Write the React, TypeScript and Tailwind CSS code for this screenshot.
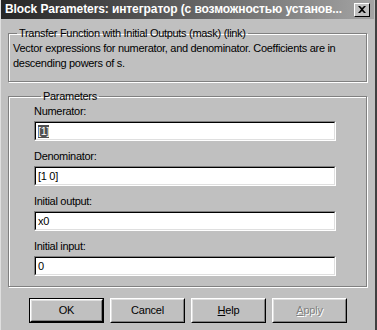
import React from "react";

const sunkenOuter = "border border-t-[#808080] border-l-[#808080] border-b-white border-r-white";
const sunkenInner = "border border-t-black border-l-black border-b-[#dfdfdf] border-r-[#dfdfdf]";

function Field({ label, value, selected }: { label: string; value: string; selected?: boolean }) {
  return (
    <div className="flex flex-col h-[45px]">
      <div className="h-[15px] leading-[15px] text-[11px] tracking-[-0.3px] text-black">{label}</div>
      <div className={`mt-[2px] w-[302px] h-[20px] ${sunkenOuter}`}>
        <div className={`h-full w-full bg-white ${sunkenInner} pl-[2px] flex items-center`}>
          {selected ? (
            <span className="bg-[#505050] text-white text-[11px] leading-[13px] tracking-[-0.3px]">{value}</span>
          ) : (
            <span className="text-black text-[11px] leading-[13px] tracking-[-0.3px]">{value}</span>
          )}
        </div>
      </div>
    </div>
  );
}

function Btn({ children, isDefault, disabled }: { children: React.ReactNode; isDefault?: boolean; disabled?: boolean }) {
  const inner = (
    <div className="h-full w-full border border-t-white border-l-white border-b-black border-r-black">
      <div className="h-full w-full border border-t-[#dfdfdf] border-l-[#dfdfdf] border-b-[#808080] border-r-[#808080] flex items-center justify-center text-[11px] tracking-[-0.2px]">
        {disabled ? (
          <span className="text-[#808080] [text-shadow:1px_1px_0_#fff]">{children}</span>
        ) : (
          <span className="text-black">{children}</span>
        )}
      </div>
    </div>
  );
  return (
    <div className={`w-[75px] h-[25px] ${isDefault ? "border border-black" : ""}`}>{inner}</div>
  );
}

export default function App() {
  return (
    <div
      className="w-[377px] h-[330px] bg-[#c0c0c0] overflow-hidden border-l border-l-[#dfdfdf] border-r-2 border-r-[#404040] flex flex-col"
      style={{ fontFamily: '"Liberation Sans", Arial, sans-serif' }}
    >
      <div className="h-[19px] mr-[1px] bg-gradient-to-r from-[#262626] to-[#a4a4a4] flex items-center pl-[4px] pr-[4px]">
        <div className="flex-1 text-white font-bold text-[12px] leading-[19px] tracking-[-0.1px] whitespace-nowrap overflow-hidden">
          Block Parameters: интегратор (с возможностью установ...
        </div>
        <div className="w-[16px] h-[14px] bg-[#c0c0c0] border border-t-white border-l-white border-b-black border-r-black flex items-center justify-center">
          <svg width="8" height="7" viewBox="0 0 8 7">
            <path d="M0 0h2l2 2 2-2h2L5 3.5 8 7H6L4 5 2 7H0l3-3.5z" fill="black" />
          </svg>
        </div>
      </div>

      <div className="pl-[7px] pr-[8px]">
        <fieldset className="mt-[7px] h-[56px] border border-[#808080] shadow-[inset_1px_1px_0_#fff,1px_1px_0_#fff] pl-[4px] pr-[4px]">
          <legend className="ml-[4px] px-[2px] text-[11px] leading-[14px] tracking-[-0.3px] text-black">
            Transfer Function with Initial Outputs (mask) (link)
          </legend>
          <div className="text-[11px] leading-[15px] tracking-[-0.3px] text-black mt-[1px]">
            Vector expressions for numerator, and denominator. Coefficients are in descending powers of s.
          </div>
        </fieldset>

        <fieldset className="mt-[7px] h-[198px] border border-[#808080] shadow-[inset_1px_1px_0_#fff,1px_1px_0_#fff] pl-[25px]">
          <legend className="ml-[7px] px-[2px] text-[11px] leading-[14px] tracking-[-0.3px] text-black">Parameters</legend>
          <div className="flex flex-col mt-[1px]">
            <Field label="Numerator:" value="[1]" selected />
            <Field label="Denominator:" value="[1 0]" />
            <Field label="Initial output:" value="x0" />
            <Field label="Initial input:" value="0" />
          </div>
        </fieldset>

        <div className="mt-[11px] pl-[21px] flex gap-[6px]">
          <Btn isDefault>OK</Btn>
          <Btn>Cancel</Btn>
          <Btn>
            <span className="underline">H</span>elp
          </Btn>
          <Btn disabled>
            <span className="underline">A</span>pply
          </Btn>
        </div>
      </div>
    </div>
  );
}
